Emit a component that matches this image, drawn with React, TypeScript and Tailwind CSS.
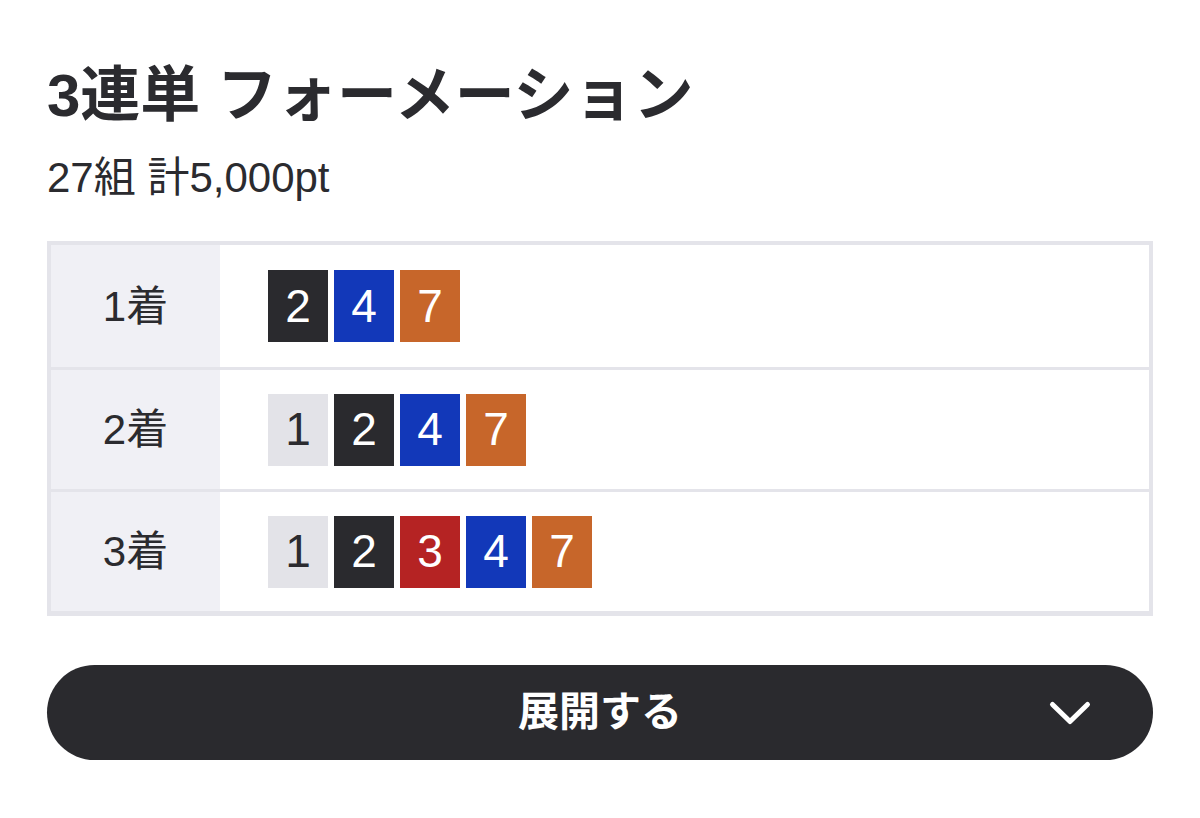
import React from 'react';

type Horse = { no: number; bg: string; fg: string };

const horses: Record<number, Horse> = {
  1: { no: 1, bg: 'bg-[#e3e3e8]', fg: 'text-[#2b2b2f]' },
  2: { no: 2, bg: 'bg-[#2a2a2e]', fg: 'text-white' },
  3: { no: 3, bg: 'bg-[#b52323]', fg: 'text-white' },
  4: { no: 4, bg: 'bg-[#1238b9]', fg: 'text-white' },
  7: { no: 7, bg: 'bg-[#c7662a]', fg: 'text-white' },
};

const rows = [
  { label: '1着', picks: [2, 4, 7] },
  { label: '2着', picks: [1, 2, 4, 7] },
  { label: '3着', picks: [1, 2, 3, 4, 7] },
];

const font = { fontFamily: '"Liberation Sans", "Noto Sans CJK JP", sans-serif' };

function Chevron() {
  return (
    <svg width="44" height="28" viewBox="0 0 44 28" fill="none" className="absolute right-[61px] top-1/2 -translate-y-1/2">
      <polyline points="4.5,5.5 22,22.5 39.5,5.5" stroke="white" strokeWidth="5" strokeLinecap="round" strokeLinejoin="round" />
    </svg>
  );
}

export default function App() {
  return (
    <div className="min-h-[818px] w-[1200px] bg-white px-[47px] pt-[60px] text-[#2b2b2f]" style={font}>
      <h1 className="text-[60px] font-bold leading-[72px]">3連単 フォーメーション</h1>
      <p className="mt-[22px] text-[42px] leading-[48px]">27組 計5,000pt</p>

      <div className="mt-[39px] border-4 border-b-[5px] border-[#e4e4ea]">
        {rows.map((row, i) => (
          <div
            key={row.label}
            className={`flex h-[122px] ${i > 0 ? 'border-t-[3px] border-[#e4e4ea]' : ''}`}
          >
            <div className="flex w-[169px] shrink-0 items-center justify-center bg-[#f0f0f5] text-[42px]">
              {row.label}
            </div>
            <div className="flex items-center gap-[6px] pl-[48px]">
              {row.picks.map((n) => {
                const h = horses[n];
                return (
                  <div
                    key={n}
                    className={`flex h-[72px] w-[60px] items-center justify-center text-[46px] ${h.bg} ${h.fg}`}
                  >
                    {h.no}
                  </div>
                );
              })}
            </div>
          </div>
        ))}
      </div>

      <button className="relative mt-[49px] flex h-[95px] w-full items-center justify-center rounded-full bg-[#2a2a2e] text-[41px] font-bold text-white">
        展開する
        <Chevron />
      </button>
    </div>
  );
}
